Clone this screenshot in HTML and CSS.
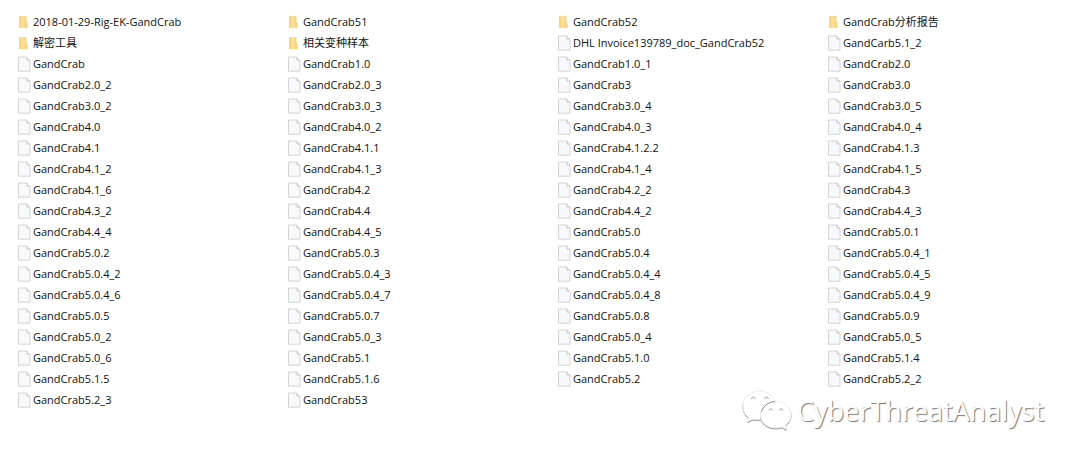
FILE: index.html
```html
<!DOCTYPE html>
<html lang="zh-CN">
<head>
<meta charset="utf-8">
<title>GandCrab</title>
<link rel="stylesheet" href="styles.css">
</head>
<body>
<svg class="sprite" aria-hidden="true">
  <defs>
    <linearGradient id="gold" x1="0" y1="0" x2="1" y2="0">
      <stop offset="0" stop-color="#f6d987"/>
      <stop offset="0.5" stop-color="#fbe09a"/>
      <stop offset="1" stop-color="#f4cf70"/>
    </linearGradient>
  </defs>
  <symbol id="d" viewBox="0 0 13 16">
    <path d="M1 2h7.500v6l1 .8V14H1z" fill="url(#gold)"/>
    <path d="M1 2l2 1.200v11L1 13.500z" fill="#f7d67d"/>
  </symbol>
  <symbol id="f" viewBox="0 0 13 16">
    <path d="M.5 1h8.500l3 3v11.200H.5z" fill="#f8f9fa" stroke="#cfcfcf" stroke-width=".9"/>
    <path d="M9 1v3h3" fill="#fff" stroke="#b8b8b8" stroke-width=".8"/>
  </symbol>
</svg>
<main class="explorer">
<ul class="files">
<li class="file"><svg class="icon"><use href="#d"/></svg>2018-01-29-Rig-EK-GandCrab</li>
<li class="file"><svg class="icon"><use href="#d"/></svg>GandCrab51</li>
<li class="file"><svg class="icon"><use href="#d"/></svg>GandCrab52</li>
<li class="file"><svg class="icon"><use href="#d"/></svg>GandCrab分析报告</li>
<li class="file"><svg class="icon"><use href="#d"/></svg>解密工具</li>
<li class="file"><svg class="icon"><use href="#d"/></svg>相关变种样本</li>
<li class="file"><svg class="icon"><use href="#f"/></svg>DHL Invoice139789_doc_GandCrab52</li>
<li class="file"><svg class="icon"><use href="#f"/></svg>GandCarb5.1_2</li>
<li class="file"><svg class="icon"><use href="#f"/></svg>GandCrab</li>
<li class="file"><svg class="icon"><use href="#f"/></svg>GandCrab1.0</li>
<li class="file"><svg class="icon"><use href="#f"/></svg>GandCrab1.0_1</li>
<li class="file"><svg class="icon"><use href="#f"/></svg>GandCrab2.0</li>
<li class="file"><svg class="icon"><use href="#f"/></svg>GandCrab2.0_2</li>
<li class="file"><svg class="icon"><use href="#f"/></svg>GandCrab2.0_3</li>
<li class="file"><svg class="icon"><use href="#f"/></svg>GandCrab3</li>
<li class="file"><svg class="icon"><use href="#f"/></svg>GandCrab3.0</li>
<li class="file"><svg class="icon"><use href="#f"/></svg>GandCrab3.0_2</li>
<li class="file"><svg class="icon"><use href="#f"/></svg>GandCrab3.0_3</li>
<li class="file"><svg class="icon"><use href="#f"/></svg>GandCrab3.0_4</li>
<li class="file"><svg class="icon"><use href="#f"/></svg>GandCrab3.0_5</li>
<li class="file"><svg class="icon"><use href="#f"/></svg>GandCrab4.0</li>
<li class="file"><svg class="icon"><use href="#f"/></svg>GandCrab4.0_2</li>
<li class="file"><svg class="icon"><use href="#f"/></svg>GandCrab4.0_3</li>
<li class="file"><svg class="icon"><use href="#f"/></svg>GandCrab4.0_4</li>
<li class="file"><svg class="icon"><use href="#f"/></svg>GandCrab4.1</li>
<li class="file"><svg class="icon"><use href="#f"/></svg>GandCrab4.1.1</li>
<li class="file"><svg class="icon"><use href="#f"/></svg>GandCrab4.1.2.2</li>
<li class="file"><svg class="icon"><use href="#f"/></svg>GandCrab4.1.3</li>
<li class="file"><svg class="icon"><use href="#f"/></svg>GandCrab4.1_2</li>
<li class="file"><svg class="icon"><use href="#f"/></svg>GandCrab4.1_3</li>
<li class="file"><svg class="icon"><use href="#f"/></svg>GandCrab4.1_4</li>
<li class="file"><svg class="icon"><use href="#f"/></svg>GandCrab4.1_5</li>
<li class="file"><svg class="icon"><use href="#f"/></svg>GandCrab4.1_6</li>
<li class="file"><svg class="icon"><use href="#f"/></svg>GandCrab4.2</li>
<li class="file"><svg class="icon"><use href="#f"/></svg>GandCrab4.2_2</li>
<li class="file"><svg class="icon"><use href="#f"/></svg>GandCrab4.3</li>
<li class="file"><svg class="icon"><use href="#f"/></svg>GandCrab4.3_2</li>
<li class="file"><svg class="icon"><use href="#f"/></svg>GandCrab4.4</li>
<li class="file"><svg class="icon"><use href="#f"/></svg>GandCrab4.4_2</li>
<li class="file"><svg class="icon"><use href="#f"/></svg>GandCrab4.4_3</li>
<li class="file"><svg class="icon"><use href="#f"/></svg>GandCrab4.4_4</li>
<li class="file"><svg class="icon"><use href="#f"/></svg>GandCrab4.4_5</li>
<li class="file"><svg class="icon"><use href="#f"/></svg>GandCrab5.0</li>
<li class="file"><svg class="icon"><use href="#f"/></svg>GandCrab5.0.1</li>
<li class="file"><svg class="icon"><use href="#f"/></svg>GandCrab5.0.2</li>
<li class="file"><svg class="icon"><use href="#f"/></svg>GandCrab5.0.3</li>
<li class="file"><svg class="icon"><use href="#f"/></svg>GandCrab5.0.4</li>
<li class="file"><svg class="icon"><use href="#f"/></svg>GandCrab5.0.4_1</li>
<li class="file"><svg class="icon"><use href="#f"/></svg>GandCrab5.0.4_2</li>
<li class="file"><svg class="icon"><use href="#f"/></svg>GandCrab5.0.4_3</li>
<li class="file"><svg class="icon"><use href="#f"/></svg>GandCrab5.0.4_4</li>
<li class="file"><svg class="icon"><use href="#f"/></svg>GandCrab5.0.4_5</li>
<li class="file"><svg class="icon"><use href="#f"/></svg>GandCrab5.0.4_6</li>
<li class="file"><svg class="icon"><use href="#f"/></svg>GandCrab5.0.4_7</li>
<li class="file"><svg class="icon"><use href="#f"/></svg>GandCrab5.0.4_8</li>
<li class="file"><svg class="icon"><use href="#f"/></svg>GandCrab5.0.4_9</li>
<li class="file"><svg class="icon"><use href="#f"/></svg>GandCrab5.0.5</li>
<li class="file"><svg class="icon"><use href="#f"/></svg>GandCrab5.0.7</li>
<li class="file"><svg class="icon"><use href="#f"/></svg>GandCrab5.0.8</li>
<li class="file"><svg class="icon"><use href="#f"/></svg>GandCrab5.0.9</li>
<li class="file"><svg class="icon"><use href="#f"/></svg>GandCrab5.0_2</li>
<li class="file"><svg class="icon"><use href="#f"/></svg>GandCrab5.0_3</li>
<li class="file"><svg class="icon"><use href="#f"/></svg>GandCrab5.0_4</li>
<li class="file"><svg class="icon"><use href="#f"/></svg>GandCrab5.0_5</li>
<li class="file"><svg class="icon"><use href="#f"/></svg>GandCrab5.0_6</li>
<li class="file"><svg class="icon"><use href="#f"/></svg>GandCrab5.1</li>
<li class="file"><svg class="icon"><use href="#f"/></svg>GandCrab5.1.0</li>
<li class="file"><svg class="icon"><use href="#f"/></svg>GandCrab5.1.4</li>
<li class="file"><svg class="icon"><use href="#f"/></svg>GandCrab5.1.5</li>
<li class="file"><svg class="icon"><use href="#f"/></svg>GandCrab5.1.6</li>
<li class="file"><svg class="icon"><use href="#f"/></svg>GandCrab5.2</li>
<li class="file"><svg class="icon"><use href="#f"/></svg>GandCrab5.2_2</li>
<li class="file"><svg class="icon"><use href="#f"/></svg>GandCrab5.2_3</li>
<li class="file"><svg class="icon"><use href="#f"/></svg>GandCrab53</li>
</ul>
<div class="watermark">
<svg class="wechat" viewBox="0 0 50 42" aria-hidden="true">
  <g fill="#fff" stroke-linejoin="round">
    <path d="M18 1C8.500 1 1 7.500 1 15.500c0 5 2 9.500 6 12.500L5.500 31.500l6-2.500c2 .6 4 .8 7 .6C29 29.500 34 23 34 16 34 7.500 27 1 18 1z" class="bubble"/>
    <path d="M34 11.500C25 11.500 18.500 17.500 18.500 25S25 38 34 38c2 0 4-.3 6-1l4.500 2.200-1.200-4C46.800 32.600 49 29 49 25 49 17.500 42.500 11.500 34 11.500z" class="bubble"/>
    <path d="M19.500 21.500C21.500 15.500 27 12 33 11.600" class="rim"/>
  </g>
  <path class="eyes" d="M9.500 9c.5-2.600 3.500-2.600 4 0M22.500 9c.5-2.600 3.500-2.600 4 0M27 20.500c.4-2.200 3-2.200 3.400 0M37.500 20.500c.4-2.200 3-2.200 3.400 0"/>
</svg>
<span>CyberThreatAnalyst</span>
</div>
</main>
</body>
</html>
```

FILE: styles.css
```css
body {
  margin: 0;
  background: #fff;
  color: #111;
  font-family: "Open Sans", "Noto Sans CJK SC", sans-serif;
}

.sprite {
  position: absolute;
  width: 0;
  height: 0;
}

.explorer {
  position: relative;
  padding: 11px 0 52px;
}

.files {
  display: grid;
  grid-template-columns: repeat(4, 1fr);
  grid-auto-rows: 21px;
  margin: 0;
  padding: 0;
  list-style: none;
}

.file {
  display: flex;
  align-items: center;
  gap: 2px;
  padding-left: 18px;
  font-size: 11px;
  line-height: 21px;
  white-space: nowrap;
}

.icon {
  flex: none;
  width: 13px;
  height: 16px;
}

.watermark {
  position: absolute;
  right: 36px;
  bottom: 30px;
  display: flex;
  align-items: center;
  gap: 5px;
  color: #fff;
  font-size: 27px;
  line-height: 42px;
  text-shadow: 1px 1px 1px #777;
}

.wechat {
  width: 50px;
  height: 42px;
}

.bubble {
  stroke: #eee;
  stroke-width: 1;
  filter: drop-shadow(0 1px 0 #999);
}

.rim {
  fill: none;
  stroke: #888;
  stroke-width: 1;
}

.eyes {
  fill: none;
  stroke: #999;
  stroke-width: 1;
}
```
